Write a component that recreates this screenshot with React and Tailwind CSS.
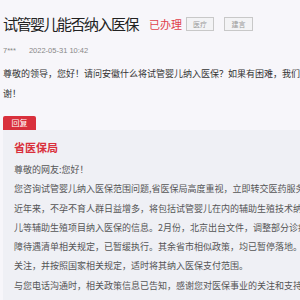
export default function App() {
  const cjk = "font-['Noto_Sans_CJK_SC','Noto_Sans',sans-serif]";
  const replyLines = [
    "尊敬的网友:您好！",
    "您咨询试管婴儿纳入医保范围问题,省医保局高度重视，立即转交医药服务处研究办理。",
    "近年来，不孕不育人群日益增多，将包括试管婴儿在内的辅助生殖技术纳入医保支付范围的呼声越来越高。",
    "儿等辅助生殖项目纳入医保的信息。2月份，北京出台文件，调整部分诊疗项目价格。",
    "障待遇清单相关规定，已暂缓执行。其余省市相似政策，均已暂停落地。我局将持续",
    "关注，并按照国家相关规定，适时将其纳入医保支付范围。",
    "与您电话沟通时，相关政策信息已告知，感谢您对医保事业的关注和支持！",
  ];
  return (
    <div className={`w-[300px] h-[300px] overflow-hidden bg-[#f7f6fa] ${cjk}`}>
      <div className="w-[600px] pl-[3px] pt-[14px]">
        <div className="flex items-center h-[20px]">
          <span className="text-[15px] leading-[20px] tracking-[-1.5px] text-[#222]">试管婴儿能否纳入医保</span>
          <span className="ml-[11px] text-[11px] leading-[14px] text-[#e0414c]">已办理</span>
          <span className="ml-[4px] w-[28px] h-[14px] border border-[#c8c8c8] bg-[#f3f3f5] text-[7px] leading-[12px] text-center text-[#999] flex items-center justify-center">医疗</span>
          <span className="ml-[10px] w-[29px] h-[14px] border border-[#c8c8c8] bg-[#f3f3f5] text-[7px] leading-[12px] text-center text-[#999] flex items-center justify-center">建言</span>
        </div>
        <div className="mt-[12px] flex items-center h-[10px] text-[7.5px] text-[#888] font-['Liberation_Sans',sans-serif]">
          <span>7***</span>
          <span className="ml-[13px]">2022-05-31 10:42</span>
        </div>
        <div className="mt-[8px] text-[9px] leading-[19.5px] text-[#333]">
          <div className="whitespace-nowrap">尊敬的领导，您好！请问安徽什么将试管婴儿纳入医保？如果有困难，我们可以理解，谢</div>
          <div className="whitespace-nowrap">谢！</div>
        </div>
        <div className="mt-[13px] w-[33px] h-[14px] bg-[#d9303c] rounded-t-[2px] text-white text-[8px] leading-[14px] text-center">回复</div>
        <div className="bg-[#eff0f5] pl-[11px] pt-[9px] pb-[20px]">
          <div className="text-[11px] leading-[16px] font-bold text-[#d9303c]">省医保局</div>
          <div className="mt-[5px] text-[9px] leading-[19.3px] text-[#555]">
            {replyLines.map((l, i) => (
              <div key={i} className="whitespace-nowrap">{l}</div>
            ))}
          </div>
        </div>
      </div>
    </div>
  );
}
